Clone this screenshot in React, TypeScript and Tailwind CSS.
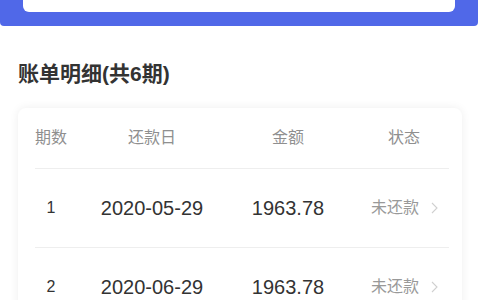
type Bill = {
  period: number;
  date: string;
  amount: string;
  status: string;
};

const bills: Bill[] = [
  { period: 1, date: '2020-05-29', amount: '1963.78', status: '未还款' },
  { period: 2, date: '2020-06-29', amount: '1963.78', status: '未还款' },
];

const font = "font-['Liberation_Sans','Noto_Sans_CJK_SC',sans-serif]";

export default function App() {
  return (
    <div className={`w-[480px] h-[300px] overflow-hidden bg-white ${font}`}>
      <div className="bg-[#5068e8] h-[26px] px-[23px] rounded-b-[4px] mr-[2px]">
        <div className="bg-white h-[12px] rounded-b-[6px]" />
      </div>

      <h1 className="mt-[36px] ml-[18px] text-[21px] leading-[24px] font-bold text-[#333]">
        账单明细(共6期)
      </h1>

      <div className="ml-[18px] mr-[18px] mt-[22px] bg-white rounded-lg shadow-[0_0_10px_rgba(0,0,0,0.07)] pl-[17px] pr-[13px]">
        <div className="grid grid-cols-[32px_170px_102px_1fr] h-[61px] items-center text-[16px] text-[#8f8f8f] border-b border-[#eee]">
          <span className="text-center">期数</span>
          <span className="text-center">还款日</span>
          <span className="text-center">金额</span>
          <span className="pl-[49px] whitespace-nowrap">状态</span>
        </div>
        {bills.map((bill) => (
          <div
            key={bill.period}
            className="grid grid-cols-[32px_170px_102px_1fr] h-[79px] items-center border-b border-[#eee]"
          >
            <span className="text-center text-[16px] text-[#333]">{bill.period}</span>
            <span className="text-center text-[20px] text-[#333]">{bill.date}</span>
            <span className="text-center text-[20px] text-[#333]">{bill.amount}</span>
            <span className="pl-[32px] flex items-center whitespace-nowrap text-[16px] text-[#999]">
              {bill.status}
              <svg width="7" height="12" viewBox="0 0 7 12" className="ml-[12px] shrink-0">
                <path d="M1 1l5 5-5 5" fill="none" stroke="#d0d0d0" strokeWidth="1.1" />
              </svg>
            </span>
          </div>
        ))}
      </div>
    </div>
  );
}
